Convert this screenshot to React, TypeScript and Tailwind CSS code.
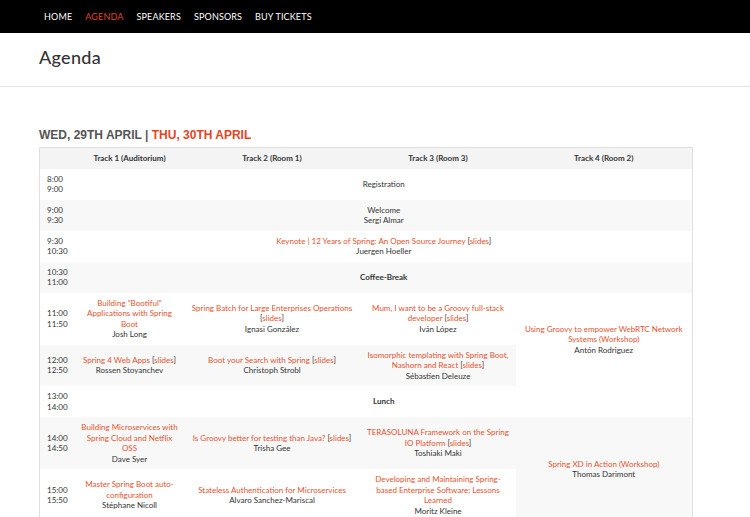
const NAV = ['HOME', 'AGENDA', 'SPEAKERS', 'SPONSORS', 'BUY TICKETS'];

function Talk({ title, slides, speaker }: { title: string; slides?: boolean; speaker: string }) {
  return (
    <>
      <div>
        <span className="text-[#e5532e]">{title}</span>
        {slides && (
          <>
            {' '}[<span className="text-[#e5532e]">slides</span>]
          </>
        )}
      </div>
      <div>{speaker}</div>
    </>
  );
}

function Time({ from, to }: { from: string; to: string }) {
  return (
    <td className="pl-[7px] pr-0 py-[5px] align-middle text-left">
      {from}
      <br />
      {to}
    </td>
  );
}

const cell = 'px-[5px] py-[5px] text-center align-middle';

export default function App() {
  return (
    <div className="min-h-[517px] bg-white font-['Lato',sans-serif] text-[#333]">
      <nav className="h-[33px] bg-black flex items-center gap-[13px] pl-[44px] text-[9px] tracking-[0.15px]">
        {NAV.map((n) => (
          <a key={n} className={n === 'AGENDA' ? 'text-[#e0452a]' : 'text-white'}>
            {n}
          </a>
        ))}
      </nav>

      <header className="h-[54px] border-b border-[#e3e3e3] pl-[39px] flex items-center">
        <h1 className="text-[18px] font-medium tracking-[0.3px] text-[#333] pb-[5px]">Agenda</h1>
      </header>

      <div className="pl-[39px] pt-[41px]">
        <h2 className="font-['Liberation_Sans',Arial,sans-serif] font-bold text-[12px] leading-[14px] text-[#555] mb-[5px]">
          WED, 29TH APRIL | <span className="text-[#e8441f]">THU, 30TH APRIL</span>
        </h2>

        <table className="w-[653px] table-fixed border-collapse border border-[#e0e0e0] text-[8px] leading-[10.5px]">
          <colgroup>
            <col className="w-[36px]" />
            <col className="w-[108px]" />
            <col className="w-[177px]" />
            <col className="w-[155px]" />
            <col className="w-[177px]" />
          </colgroup>
          <thead>
            <tr className="bg-[#f4f4f4] h-[21px] font-bold">
              <th />
              <th className="text-center">Track 1 (Auditorium)</th>
              <th className="text-center">Track 2 (Room 1)</th>
              <th className="text-center">Track 3 (Room 3)</th>
              <th className="text-center">Track 4 (Room 2)</th>
            </tr>
          </thead>
          <tbody>
            <tr className="bg-white">
              <Time from="8:00" to="9:00" />
              <td colSpan={4} className={cell}>Registration</td>
            </tr>
            <tr className="bg-[#f8f8f8]">
              <Time from="9:00" to="9:30" />
              <td colSpan={4} className={cell}>
                Welcome
                <br />
                Sergi Almar
              </td>
            </tr>
            <tr className="bg-white">
              <Time from="9:30" to="10:30" />
              <td colSpan={4} className={cell}>
                <Talk title="Keynote | 12 Years of Spring: An Open Source Journey" slides speaker="Juergen Hoeller" />
              </td>
            </tr>
            <tr className="bg-[#f8f8f8]">
              <Time from="10:30" to="11:00" />
              <td colSpan={4} className={`${cell} font-bold`}>Coffee-Break</td>
            </tr>
            <tr className="bg-white">
              <Time from="11:00" to="11:50" />
              <td className={cell}>
                <Talk title={'Building "Bootiful" Applications with Spring Boot'} speaker="Josh Long" />
              </td>
              <td className={cell}>
                <Talk title="Spring Batch for Large Enterprises Operations" slides speaker="Ignasi González" />
              </td>
              <td className={cell}>
                <Talk title="Mum, I want to be a Groovy full-stack developer" slides speaker="Iván López" />
              </td>
              <td rowSpan={2} className={`${cell} bg-white`}>
                <Talk title="Using Groovy to empower WebRTC Network Systems (Workshop)" speaker="Antón Rodriguez" />
              </td>
            </tr>
            <tr className="bg-[#f8f8f8]">
              <Time from="12:00" to="12:50" />
              <td className={cell}>
                <Talk title="Spring 4 Web Apps" slides speaker="Rossen Stoyanchev" />
              </td>
              <td className={cell}>
                <Talk title="Boot your Search with Spring" slides speaker="Christoph Strobl" />
              </td>
              <td className={cell}>
                <Talk title="Isomorphic templating with Spring Boot, Nashorn and React" slides speaker="Sébastien Deleuze" />
              </td>
            </tr>
            <tr className="bg-white">
              <Time from="13:00" to="14:00" />
              <td colSpan={4} className={`${cell} font-bold`}>Lunch</td>
            </tr>
            <tr className="bg-[#f8f8f8]">
              <Time from="14:00" to="14:50" />
              <td className={cell}>
                <Talk title="Building Microservices with Spring Cloud and Netflix OSS" speaker="Dave Syer" />
              </td>
              <td className={cell}>
                <Talk title="Is Groovy better for testing than Java?" slides speaker="Trisha Gee" />
              </td>
              <td className={cell}>
                <Talk title="TERASOLUNA Framework on the Spring IO Platform" slides speaker="Toshiaki Maki" />
              </td>
              <td rowSpan={2} className={cell}>
                <Talk title="Spring XD in Action (Workshop)" speaker="Thomas Darimont" />
              </td>
            </tr>
            <tr className="bg-white">
              <Time from="15:00" to="15:50" />
              <td className={cell}>
                <Talk title="Master Spring Boot auto-configuration" speaker="Stéphane Nicoll" />
              </td>
              <td className={cell}>
                <Talk title="Stateless Authentication for Microservices" speaker="Alvaro Sanchez-Mariscal" />
              </td>
              <td className={cell}>
                <Talk title="Developing and Maintaining Spring-based Enterprise Software: Lessons Learned" speaker="Moritz Kleine" />
              </td>
            </tr>
          </tbody>
        </table>
      </div>
    </div>
  );
}
